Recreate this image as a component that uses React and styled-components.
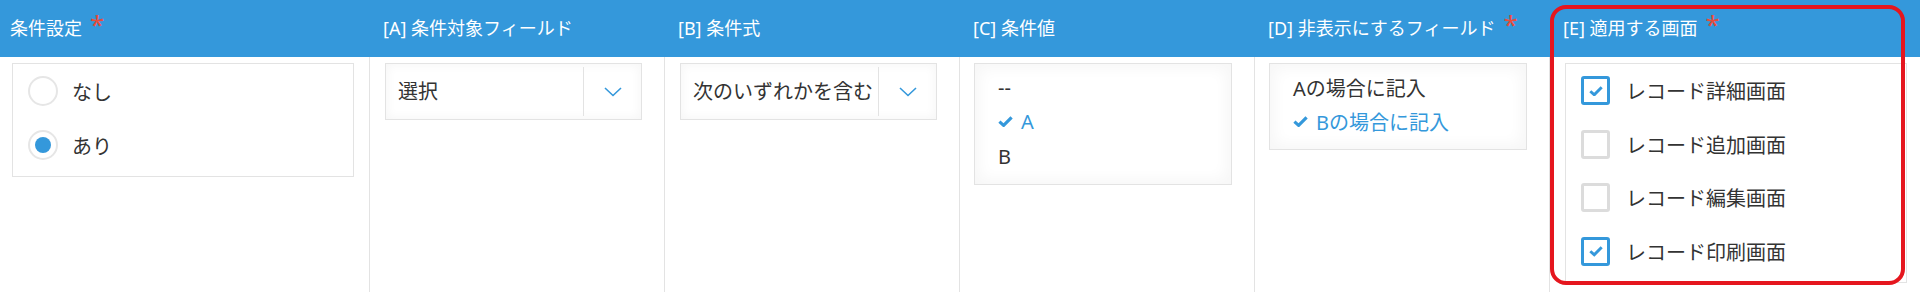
import React from "react";
import styled, { createGlobalStyle } from "styled-components";

const GlobalStyle = createGlobalStyle`
  body {
    margin: 0;
    background: #fff;
    color: #333;
    font-family: "Noto Sans", "Noto Sans CJK JP", sans-serif;
  }
`;

const Table = styled.div`
  display: grid;
  grid-template-columns: 369px 295px 295px 295px 295px 1fr;
  grid-template-rows: 57px 235px;
  width: 1920px;
`;

const HeadCell = styled.div`
  grid-row: 1;
  grid-column: ${(p) => p.$col};
  background: #3498db;
  color: #fff;
  font-size: 18px;
  display: flex;
  align-items: center;
  padding: 0 0 4px ${(p) => p.$pad}px;
  white-space: nowrap;
`;

const Req = styled.span`
  color: #e74c3c;
  font-size: 26px;
  line-height: 1;
  margin-left: 8px;
  position: relative;
  top: -3px;
`;

const BodyCell = styled.div`
  grid-row: 2;
  grid-column: ${(p) => p.$col};
  border-left: ${(p) => (p.$col === 1 ? "none" : "1px solid #e3e3e3")};
  padding: 6px 0 0 ${(p) => p.$pad}px;
`;

const Panel = styled.div`
  width: 342px;
  box-sizing: border-box;
  border: 1px solid #e3e3e3;
  padding: 0 0 4px 15px;
`;

const OptionRow = styled.label`
  height: ${(p) => p.$h}px;
  display: flex;
  align-items: center;
  gap: 14px;
  font-size: 20px;
  color: #333;
`;

const Radio = styled.span`
  width: 30px;
  height: 30px;
  box-sizing: border-box;
  border-radius: 50%;
  border: 2px solid #e6e6e6;
  display: flex;
  align-items: center;
  justify-content: center;
  &::after {
    content: "";
    width: 16px;
    height: 16px;
    border-radius: 50%;
    background: ${(p) => (p.$on ? "#3498db" : "transparent")};
  }
`;

const Checkbox = styled.span`
  width: 29px;
  height: 29px;
  box-sizing: border-box;
  border-radius: 3px;
  border: 3px solid ${(p) => (p.$on ? "#3498db" : "#dcdcdc")};
  display: flex;
  align-items: center;
  justify-content: center;
  margin-right: 2px;
`;

const Select = styled.div`
  width: 257px;
  height: 57px;
  box-sizing: border-box;
  border: 1px solid #e3e3e3;
  box-shadow: inset 0 0 10px 2px rgba(0, 0, 0, 0.035);
  display: flex;
`;

const SelectValue = styled.div`
  flex: 1;
  display: flex;
  align-items: center;
  padding: 0 0 2px 12px;
  font-size: 20px;
  white-space: nowrap;
  overflow: hidden;
`;

const SelectButton = styled.div`
  width: 57px;
  margin: 3px 0;
  border-left: 1px solid #e3e3e3;
  display: flex;
  align-items: center;
  justify-content: center;
`;

const ListBox = styled.div`
  width: 258px;
  box-sizing: border-box;
  border: 1px solid #e3e3e3;
  box-shadow: inset 0 0 14px 5px rgba(0, 0, 0, 0.035);
  padding: 6px 0 10px;
`;

const ListItem = styled.div`
  height: 34.5px;
  display: flex;
  align-items: center;
  gap: 8px;
  padding-left: 23px;
  font-size: 20px;
  color: ${(p) => (p.$on ? "#3498db" : "#333")};
  white-space: nowrap;
`;

const Highlight = styled.div`
  grid-column: 6;
  grid-row: 1 / 3;
  margin: 5px 15px 7px 1px;
  border: 4px solid #e5161e;
  border-radius: 16px;
  pointer-events: none;
  z-index: 2;
`;

const Chevron = () => (
  <svg width="18" height="10" viewBox="0 0 18 10">
    <polyline points="1,1 9,8.5 17,1" fill="none" stroke="#3498db" strokeWidth="1.6" />
  </svg>
);

const Tick = ({ size = 15 }) => (
  <svg width={size} height={size * 0.75} viewBox="0 0 16 12">
    <polyline points="1.5,6 6,10 14.5,1.5" fill="none" stroke="#3498db" strokeWidth="3.4" />
  </svg>
);

const heads = [
  { label: "条件設定", req: true, pad: 10 },
  { label: "[A] 条件対象フィールド", pad: 14 },
  { label: "[B] 条件式", pad: 14 },
  { label: "[C] 条件値", pad: 14 },
  { label: "[D] 非表示にするフィールド", req: true, pad: 14 },
  { label: "[E] 適用する画面", req: true, pad: 14 },
];

const screens = [
  { label: "レコード詳細画面", on: true },
  { label: "レコード追加画面", on: false },
  { label: "レコード編集画面", on: false },
  { label: "レコード印刷画面", on: true },
];

export default function App() {
  return (
    <>
      <GlobalStyle />
      <Table>
        {heads.map((h, i) => (
          <HeadCell key={h.label} $col={i + 1} $pad={h.pad}>
            {h.label}
            {h.req && <Req>*</Req>}
          </HeadCell>
        ))}

        <BodyCell $col={1} $pad={12}>
          <Panel>
            <OptionRow $h={54}>
              <Radio />
              なし
            </OptionRow>
            <OptionRow $h={54}>
              <Radio $on />
              あり
            </OptionRow>
          </Panel>
        </BodyCell>

        <BodyCell $col={2} $pad={15}>
          <Select>
            <SelectValue>選択</SelectValue>
            <SelectButton>
              <Chevron />
            </SelectButton>
          </Select>
        </BodyCell>

        <BodyCell $col={3} $pad={15}>
          <Select>
            <SelectValue>次のいずれかを含む</SelectValue>
            <SelectButton>
              <Chevron />
            </SelectButton>
          </Select>
        </BodyCell>

        <BodyCell $col={4} $pad={14}>
          <ListBox>
            <ListItem>--</ListItem>
            <ListItem $on>
              <Tick />A
            </ListItem>
            <ListItem>B</ListItem>
          </ListBox>
        </BodyCell>

        <BodyCell $col={5} $pad={14}>
          <ListBox>
            <ListItem>Aの場合に記入</ListItem>
            <ListItem $on>
              <Tick />Bの場合に記入
            </ListItem>
          </ListBox>
        </BodyCell>

        <BodyCell $col={6} $pad={15}>
          <Panel>
            {screens.map((s) => (
              <OptionRow key={s.label} $h={53.5}>
                <Checkbox $on={s.on}>{s.on && <Tick size={14} />}</Checkbox>
                {s.label}
              </OptionRow>
            ))}
          </Panel>
        </BodyCell>

        <Highlight />
      </Table>
    </>
  );
}
